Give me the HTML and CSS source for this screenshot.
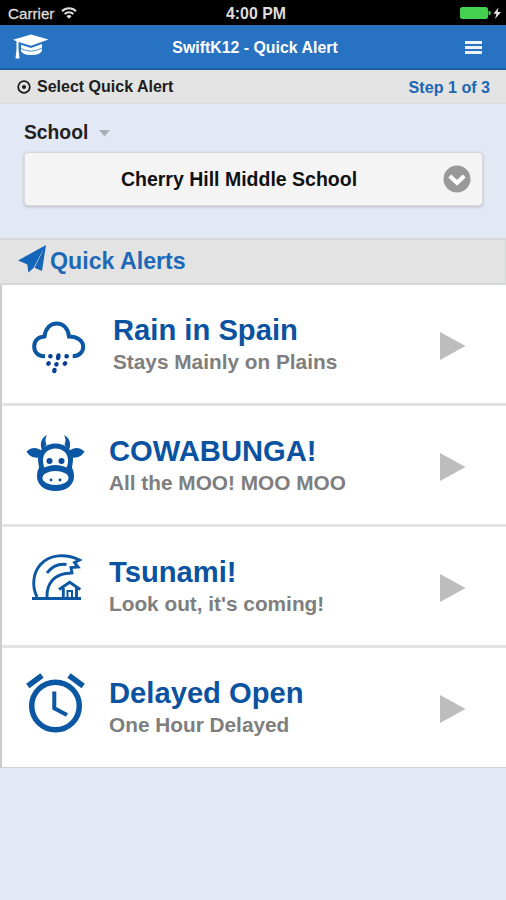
FILE: index.html
```html
<!DOCTYPE html>
<html lang="en">

<head>
    <meta charset="UTF-8">
    <meta name="viewport" content="width=device-width, initial-scale=1.0">
    <title>SwiftK12 - Quick Alert</title>
    <link rel="stylesheet" href="styles.css">
</head>

<body>
    <div class="status-bar">
        <div class="carrier">
            <span>Carrier</span>
            <svg width="16" height="12" viewBox="0 0 16 12" fill="none" stroke="#ddd" stroke-width="2">
                <path d="M1 4.2a10 10 0 0 1 14 0M3.6 7a6.3 6.3 0 0 1 8.8 0" />
                <path d="M8 11.8L5.4 9.2a3.7 3.7 0 0 1 5.2 0z" fill="#ddd" stroke="none" />
            </svg>
        </div>
        <span class="time">4:00 PM</span>
        <div class="battery">
            <svg width="43" height="14" viewBox="0 0 43 14">
                <rect x="1" y="1" width="28" height="12" rx="2.5" fill="#44d150" />
                <path d="M29.5 4.500q2.500.8 2.500 2.500t-2.500 2.500z" fill="#44d150" />
                <path d="M39.5 1.5L34.500 7.800h3L36 13 42 6h-3.500z" fill="#eee" />
            </svg>
        </div>
    </div>

    <header class="header">
        <svg class="logo" width="36" height="26" viewBox="0 0 36 26" fill="#fff">
            <path d="M18 .5L35.500 5.500 18 11.800 5.500 8V15l1 9.500H2.500L3.500 15V7.200L0 5.800z" />
            <path d="M8 10.800L18 14l11-4v6.500Q27.500 21 18.500 21T8 17z" />
            <path d="M8 14.500Q18 20 29 14" fill="none" stroke="#2872c2" stroke-width=".8" />
        </svg>
        <h1>SwiftK12 - Quick Alert</h1>
        <div class="menu">
            <span></span>
            <span></span>
            <span></span>
        </div>
    </header>

    <div class="step-bar">
        <svg width="14" height="14" viewBox="0 0 14 14">
            <circle cx="7" cy="7" r="5.800" fill="none" stroke="#1d1d1d" stroke-width="1.800" />
            <circle cx="7" cy="7" r="2.100" fill="#1d1d1d" />
        </svg>
        <span class="step-title">Select Quick Alert</span>
        <span class="step-count">Step 1 of 3</span>
    </div>

    <div class="school">
        <div class="school-label">
            <span>School</span>
            <svg width="11" height="7" viewBox="0 0 11 7"><path d="M0 0h11L5.500 6.500z" fill="#aaadb2" /></svg>
        </div>
        <div class="school-select">
            <span>Cherry Hill Middle School</span>
            <svg width="28" height="28" viewBox="0 0 28 28">
                <circle cx="14" cy="14" r="13.500" fill="#999" />
                <path d="M6.800 11l7.200 6.800L21.200 11" fill="none" stroke="#fff" stroke-width="4.200" />
            </svg>
        </div>
    </div>

    <div class="section-title">
        <svg width="28" height="28" viewBox="0 0 28 28" fill="#1566b8">
            <path d="M28 0L24 26 16.500 22.800 25.500 4.500 12 21 10.500 27.500 9.500 19.500 0 15.500z" />
            <path d="M25.500 4L9.500 19.500l1 8 5-4.500z" />
        </svg>
        <h2>Quick Alerts</h2>
    </div>

    <div class="alert-list">
        <div class="alert alert-rain">
            <svg class="icon" width="60" height="60" viewBox="0 0 60 60">
                <path d="M18 42.200h-1.500C11 42.200 7.200 38 7.200 32.500c0-6 4-9.500 10.300-10C18.500 14 23.500 9.500 29.800 9.500S41 14 42 22.500c8 0 14.200 4 14.200 10.200 0 5.500-4.200 9.500-10.500 9.500" fill="none" stroke="#0b57a3" stroke-width="4" />
                <g fill="none" stroke="#0b3f96" stroke-width="4.400" stroke-linecap="round">
                    <path d="M23.300 42.300h.2M31.500 41.500l-.5 2.500M39.500 42.300h.3M21.300 49.700l.4-.4M29.300 50.500l.2-.3M37.800 49.700l.4-.4M27.300 57l.2-1" />
                </g>
            </svg>
            <div class="alert-text">
                <h3>Rain in Spain</h3>
                <p>Stays Mainly on Plains</p>
            </div>
            <svg class="arrow" width="26" height="28" viewBox="0 0 26 28"><path d="M0 0l25.500 14L0 28z" /></svg>
        </div>

        <div class="alert">
            <svg class="icon" width="60" height="60" viewBox="0 -2 60 60">
                <g fill="#0b57a3">
                    <path d="M21 2c-2 3.500-2 6.500-.5 9.500L16 17C13.500 11 15 5 21 2zM38 2c2 3.500 2 6.500.5 9.500L43 17C45.500 11 44 5 38 2z" />
                    <path d="M.5 18.500c5-4.500 10-4.500 15-1l-2 7C7.500 25.500 3 23 .5 18.500zM58.500 18.500c-5-4.500-10-4.500-15-1l2 7c6 1 10.500-1.500 13-6z" />
                    <path d="M29.500 10.500c10 0 17.500 6.500 17.500 15.500 0 4-1 7-1 9 1.500 2 2 5 2 8.500C48 52 40.500 58 29.500 58S11 52 11 43.500c0-3.500.5-6.500 2-8.500 0-2-1-5-1-9 0-9 7.500-15.500 17.500-15.500z" />
                </g>
                <path d="M29.500 15.500c7.500 0 12.500 5 12.500 11.500 0 3.500-.5 5.500-1.500 7.500-6-3.500-16-3.500-22 0-1-2-1.500-4-1.500-7.500 0-6.500 5-11.500 12.500-11.500z" fill="#fff" />
                <ellipse cx="29.500" cy="45" rx="13" ry="7" fill="#fff" />
                <g fill="#0b4b9b">
                    <circle cx="23.500" cy="28" r="3" />
                    <circle cx="35.500" cy="28" r="3" />
                    <circle cx="25" cy="47" r="1.400" />
                    <circle cx="34" cy="47" r="1.400" />
                </g>
            </svg>
            <div class="alert-text">
                <h3>COWABUNGA!</h3>
                <p>All the MOO! MOO MOO</p>
            </div>
            <svg class="arrow" width="26" height="28" viewBox="0 0 26 28"><path d="M0 0l25.500 14L0 28z" /></svg>
        </div>

        <div class="alert">
            <svg class="icon" width="60" height="60" viewBox="0 0 60 60" fill="none" stroke="#0b57a3" stroke-width="2.900">
                <path d="M6 46.500h49" />
                <path d="M11 45C5.500 34 7 21 14.500 12.500 24 2 40 1.500 53.500 8l-5 2.500 3.500 4.500-7 .5 1 5.500-6 .5C29 23 20.500 31 21 45" />
                <path d="M21 21C25.500 15 32 11.500 40.500 12.500" />
                <path d="M33 37.500l10.700-7.200 10.600 7.200M37.300 36v9M50.500 36v9" />
                <path d="M41.500 45v-6h4.500v6" stroke-width="2" />
            </svg>
            <div class="alert-text">
                <h3>Tsunami!</h3>
                <p>Look out, it's coming!</p>
            </div>
            <svg class="arrow" width="26" height="28" viewBox="0 0 26 28"><path d="M0 0l25.500 14L0 28z" /></svg>
        </div>

        <div class="alert">
            <svg class="icon" width="60" height="60" viewBox="0 0 60 60" fill="none" stroke="#0b57a3">
                <circle cx="29.500" cy="33" r="23.800" stroke-width="5.500" />
                <path d="M28.300 18.500v16.700L41 42" stroke-width="4" />
                <path d="M1.800 13L16 2.500M43 2.500L57.200 13" stroke-width="5.500" />
            </svg>
            <div class="alert-text">
                <h3>Delayed Open</h3>
                <p>One Hour Delayed</p>
            </div>
            <svg class="arrow" width="26" height="28" viewBox="0 0 26 28"><path d="M0 0l25.500 14L0 28z" /></svg>
        </div>
    </div>
</body>

</html>
```

FILE: styles.css
```css
* {
    margin: 0;
    padding: 0;
    box-sizing: border-box;
    font-family: 'Liberation Sans', Arial, sans-serif;
}

:root {
    --header: #2872c2;
    --link: #1c67b4;
    --title: #0b53a0;
    --bg: #e3e8f5;
    --bar: #e3e3e3;
}

body {
    background-color: var(--bg);
    min-height: 100vh;
    font-weight: bold;
}

svg {
    display: block;
    flex-shrink: 0;
}

.status-bar {
    display: grid;
    grid-template-columns: 1fr auto 1fr;
    align-items: center;
    height: 25px;
    padding: 1px 4px 0 8px;
    background: #000;
    color: #ddd;
}

.carrier {
    display: flex;
    align-items: center;
    gap: 7px;
    font-size: 15.2px;
    font-weight: normal;
    -webkit-text-stroke: 0.3px #ddd;
}

.time {
    font-size: 15.9px;
    padding: 2px 0 0 2px;
}

.battery {
    display: flex;
    justify-content: flex-end;
}

.header {
    display: grid;
    grid-template-columns: 1fr auto 1fr;
    align-items: center;
    height: 45px;
    padding: 1px 24px 0 13px;
    background: var(--header);
    border-bottom: 2px solid #1c5c9f;
    color: #fff;
}

.header h1 {
    font-size: 15.9px;
    padding: 2px 0 0 15px;
    line-height: 20px;
}

.menu {
    display: flex;
    flex-direction: column;
    gap: 2px;
    justify-self: end;
}

.menu span {
    width: 17px;
    height: 3px;
    background: #edf2fa;
}

.step-bar {
    display: flex;
    align-items: center;
    height: 34px;
    padding: 0 16px 0 17px;
    background: var(--bar);
    border-bottom: 1px solid #dbdde1;
    color: #1d1d1d;
    font-size: 16px;
}

.step-title {
    margin-left: 6px;
}

.step-count {
    margin-left: auto;
    padding-top: 2px;
    color: var(--link);
    font-size: 16.1px;
}

.school {
    height: 134px;
    padding: 17px 23px 0 24px;
}

.school-label {
    display: flex;
    align-items: center;
    gap: 11px;
    height: 24px;
    margin-bottom: 7px;
    color: #222;
    font-size: 19.3px;
}

.school-select {
    display: flex;
    align-items: center;
    height: 54px;
    padding: 0 11px 0 0;
    background: #f4f4f4;
    border: 1px solid #d8dadb;
    border-radius: 4px;
    box-shadow: 0 1px 3px rgba(0, 0, 0, 0.2);
    color: #111;
    font-size: 19.5px;
}

.school-select span {
    flex: 1;
    padding: 1px 0 0 10px;
    text-align: center;
}

.section-title {
    display: flex;
    align-items: center;
    gap: 4px;
    height: 47px;
    padding: 0 18px;
    background: var(--bar);
    border: 2px solid #d6d8d8;
    border-width: 2px 1px 2px 0;
}

.section-title svg {
    margin-bottom: 5px;
}

.section-title h2 {
    color: #1d69b8;
    font-size: 23.2px;
}

.alert-list {
    background: #fff;
    border-left: 2px solid #ccc;
}

.alert {
    display: flex;
    align-items: center;
    height: 121px;
    padding: 0 40px 0 24px;
    border-bottom: 3px solid #e3e3e3;
}

.alert:last-child {
    border-bottom: 1px solid #d0d2d8;
    height: 120px;
    padding-bottom: 1px;
}

.icon {
    margin: 0 23px 8px 0;
}

.alert-rain .icon {
    margin: 0 26px 0 1px;
}

.alert-text {
    flex: 1;
    padding-top: 2px;
}

.alert-text h3 {
    color: var(--title);
    font-size: 29.2px;
    line-height: 33px;
}

.alert-text p {
    color: #7e7e7e;
    font-size: 20.8px;
    line-height: 30px;
}

.arrow {
    fill: #bdbdbd;
    margin-top: 4px;
}
```
